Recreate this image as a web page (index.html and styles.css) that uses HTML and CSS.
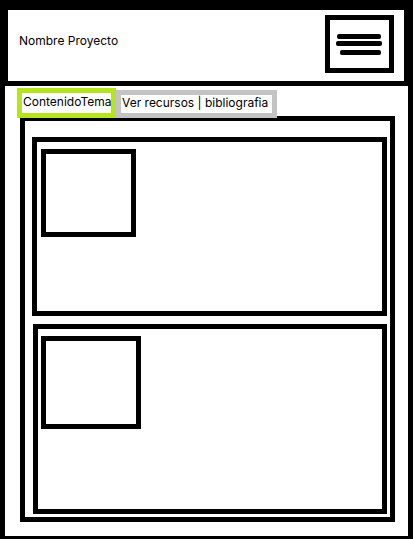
FILE: index.html
```html
<!DOCTYPE html>
<html lang="es">
<head>
<meta charset="utf-8">
<meta name="viewport" content="width=device-width, initial-scale=1">
<title>Nombre Proyecto</title>
<link rel="stylesheet" href="styles.css">
</head>
<body>
<header class="header">
  <h1 class="title">Nombre Proyecto</h1>
  <button class="menu" type="button" aria-label="Menú">
    <svg class="menu-icon" viewBox="0 0 59 48" aria-hidden="true">
      <rect x="7" y="14" width="44" height="5" rx="2"/>
      <rect x="6" y="21" width="46" height="5" rx="2"/>
      <rect x="10" y="30" width="41" height="5" rx="2"/>
    </svg>
  </button>
</header>
<main class="page">
  <nav class="tabs">
    <a class="tab tab-active" href="#contenido">ContenidoTema</a>
    <a class="tab tab-resources" href="#recursos">Ver recursos | bibliografia</a>
  </nav>
  <section class="content" id="contenido">
    <article class="card card-first"><div class="thumb"></div></article>
    <article class="card card-second"><div class="thumb thumb-large"></div></article>
  </section>
</main>
</body>
</html>
```
FILE: styles.css
```css
* {
  box-sizing: border-box;
}

body {
  display: flex;
  flex-direction: column;
  min-height: 100vh;
  margin: 0;
  padding: 10px 5px 3px;
  background: #000;
  color: #000;
  font: 12px/16px Inter, "Liberation Sans", sans-serif;
}

.header {
  display: flex;
  justify-content: space-between;
  align-items: flex-start;
  margin: 0 4px 5px 3px;
  padding: 5px 10px 8px 11px;
  background: #fff;
}

.title {
  margin: 18px 0 0;
  font-size: 12px;
  font-weight: 400;
}

.menu {
  width: 69px;
  height: 58px;
  padding: 0;
  border: 5px solid #000;
  background: #fff;
}

.menu-icon {
  display: block;
  width: 100%;
  fill: #000;
}

.page {
  flex: 1;
  padding: 2px 13px 14px 12px;
  background: #fff;
}

.tabs {
  position: relative;
  display: flex;
  align-items: flex-end;
  margin-bottom: -2px;
}

.tab {
  padding: 0 0 2px 1px;
  border: 5px solid #c3c3c3;
  background: #fff;
  color: #000;
  text-decoration: none;
  white-space: nowrap;
}

.tab-active {
  width: 99px;
  padding: 1px 1px 3px;
  border-color: #b5e61d;
}

.tab-resources {
  width: 161px;
}

.content {
  display: flex;
  flex-direction: column;
  gap: 8px;
  margin-left: 3px;
  padding: 16px 3px 3px 7px;
  border: 5px solid #000;
}

.card {
  border: 5px solid #000;
}

.card-first {
  min-height: 179px;
  padding: 7px 4px;
}

.card-second {
  min-height: 190px;
  margin-left: 1px;
  padding: 7px 3px;
}

.thumb {
  width: 95px;
  height: 88px;
  border: 5px solid #000;
}

.thumb-large {
  width: 100px;
  height: 93px;
}
```
